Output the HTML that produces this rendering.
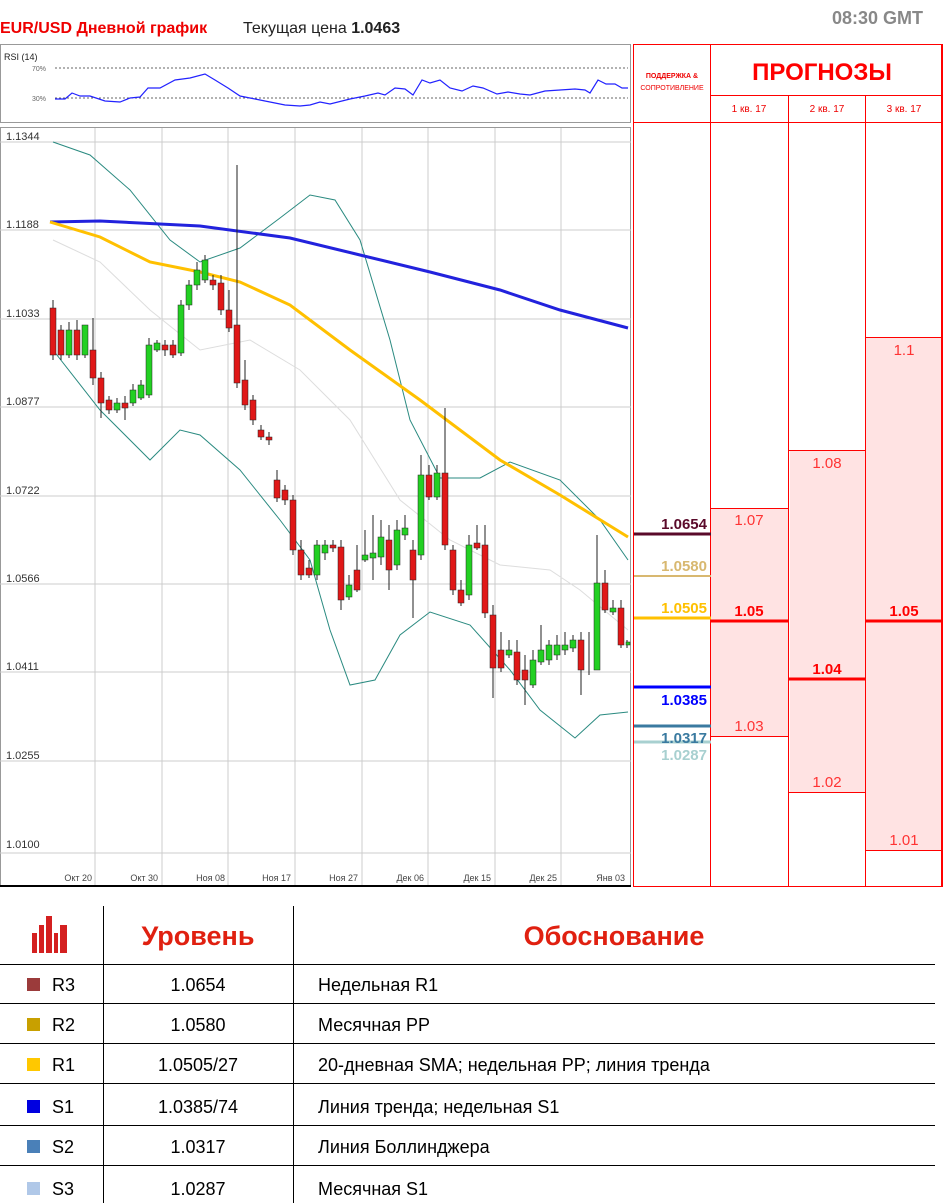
<!DOCTYPE html>
<html><head><meta charset="utf-8"><style>
body{margin:0;width:949px;height:1203px;background:#fff;font-family:"Liberation Sans",sans-serif;position:relative;overflow:hidden}
.a{position:absolute}
</style></head><body>
<div class="a" style="left:0;top:20px;font-size:16px;font-weight:bold;color:#e00">EUR/USD Дневной график</div>
<div class="a" style="left:243px;top:20px;font-size:16px;color:#222">Текущая цена <b>1.0463</b></div>
<div class="a" style="left:832px;top:8px;font-size:18px;font-weight:bold;color:#888">08:30 GMT</div>

<svg class="a" style="left:0;top:0" width="949" height="900" font-family="Liberation Sans, sans-serif">
<rect x="0.5" y="44.5" width="630" height="78" fill="#fff" stroke="#999"/>
<text x="4" y="60" font-size="9" fill="#222">RSI (14)</text>
<text x="32" y="71" font-size="7" fill="#666">70%</text>
<text x="32" y="101" font-size="7" fill="#666">30%</text>
<line x1="55" y1="68" x2="628" y2="68" stroke="#666" stroke-dasharray="2,2"/>
<line x1="55" y1="98" x2="628" y2="98" stroke="#666" stroke-dasharray="2,2"/>
<polyline fill="none" stroke="#22f" stroke-width="1.2" points="55,99 65,99 72,93 80,96 90,96 105,101 120,102 130,98 140,97 148,88 160,88 175,80 190,78 205,74 215,80 228,88 240,96 255,99 270,102 285,105 300,106 310,105 320,102 330,104 350,99 365,96 378,93 385,95 395,88 405,89 413,95 422,80 430,83 440,80 450,88 462,91 473,86 483,88 497,94 508,92 520,94 530,95 545,91 560,90 575,89 585,90 590,93 598,80 606,84 615,84 622,88 628,88"/>

<rect x="0.5" y="127.5" width="630" height="759" fill="#fff" stroke="#999"/>
<g stroke="#ccc" stroke-width="1">
<line x1="0" y1="142" x2="631" y2="142"/><line x1="0" y1="230" x2="631" y2="230"/><line x1="0" y1="319" x2="631" y2="319"/><line x1="0" y1="407" x2="631" y2="407"/><line x1="0" y1="496" x2="631" y2="496"/><line x1="0" y1="584" x2="631" y2="584"/><line x1="0" y1="672" x2="631" y2="672"/><line x1="0" y1="761" x2="631" y2="761"/><line x1="0" y1="853" x2="631" y2="853"/>
<line x1="95" y1="128" x2="95" y2="886"/><line x1="162" y1="128" x2="162" y2="886"/><line x1="228" y1="128" x2="228" y2="886"/><line x1="295" y1="128" x2="295" y2="886"/><line x1="362" y1="128" x2="362" y2="886"/><line x1="428" y1="128" x2="428" y2="886"/><line x1="495" y1="128" x2="495" y2="886"/><line x1="561" y1="128" x2="561" y2="886"/>
</g>
<line x1="0" y1="886" x2="631" y2="886" stroke="#000" stroke-width="2"/>
<g font-size="11" fill="#333">
<text x="6" y="140">1.1344</text><text x="6" y="228">1.1188</text><text x="6" y="317">1.1033</text><text x="6" y="405">1.0877</text><text x="6" y="494">1.0722</text><text x="6" y="582">1.0566</text><text x="6" y="670">1.0411</text><text x="6" y="759">1.0255</text><text x="6" y="848">1.0100</text>
</g>
<g font-size="9" fill="#444" text-anchor="end">
<text x="92" y="881">Окт 20</text><text x="158" y="881">Окт 30</text><text x="225" y="881">Ноя 08</text><text x="291" y="881">Ноя 17</text><text x="358" y="881">Ноя 27</text><text x="424" y="881">Дек 06</text><text x="491" y="881">Дек 15</text><text x="557" y="881">Дек 25</text><text x="625" y="881">Янв 03</text>
</g>
<polyline fill="none" stroke="#ddd" stroke-width="1" points="53,240 100,262 150,310 200,350 250,340 300,370 350,420 400,500 450,540 500,565 550,570 580,590 628,630"/>
<polyline fill="none" stroke="#2a8a80" stroke-width="1" points="53,142 90,155 130,190 170,240 200,262 240,248 280,218 310,195 335,200 360,240 390,340 410,420 440,478 480,478 510,462 560,480 600,520 628,560"/>
<polyline fill="none" stroke="#2a8a80" stroke-width="1" points="53,350 100,410 150,460 180,430 200,435 240,470 280,520 310,560 330,630 350,685 375,680 400,635 430,612 470,625 510,670 540,710 575,738 600,715 628,712"/>
<polyline fill="none" stroke="#22d" stroke-width="3" points="50,222 100,221 200,226 290,238 360,255 430,272 500,290 560,310 628,328"/>
<polyline fill="none" stroke="#ffc000" stroke-width="3" points="50,222 100,237 150,262 200,272 240,282 290,305 350,350 420,400 460,430 500,460 560,495 628,537"/>
<g stroke="#222" stroke-width="1">
<path d="M53 300V360M61 325V360M69 322V358M77 320V360M85 330V358M93 318V385M101 372V418M109 396V414M117 398V413M125 396V420M133 384V406M141 380V400M149 338V398M157 340V352M165 340V356M173 340V358M181 300V356M189 280V310M197 262V290M205 255V283M213 275V290M221 275V315M229 290V332M237 165V388M245 360V410M253 395V425M261 425V440M269 432V445M277 470V502M285 485V505M293 495V555M301 540V580M309 560V578M317 540V580M325 540V560M333 540V552M341 540V610M349 575V600M357 545V592M365 530V562M373 515V580M381 520V565M389 525V590M397 520V570M405 515V540M413 540V618M421 455V560M429 465V500M437 465V500M445 408V550M453 545V595M461 580V606M469 535V600M477 525V550M485 525V618M493 605V698M501 632V672M509 640V658M517 640V685M525 655V705M533 650V688M541 625V665M549 640V665M557 635V660M565 632V655M573 635V652M581 632V695M589 632V675M597 535V670M605 570V613M613 600V615M621 600V648M627 640V648"/>
</g>
<g stroke="#222" stroke-width="0.5">
<g fill="#e01818">
<rect x="50" y="308" width="6" height="47"/><rect x="58" y="330" width="6" height="25"/><rect x="74" y="330" width="6" height="25"/><rect x="90" y="350" width="6" height="28"/><rect x="98" y="378" width="6" height="25"/><rect x="106" y="400" width="6" height="10"/><rect x="122" y="403" width="6" height="5"/><rect x="162" y="345" width="6" height="5"/><rect x="170" y="345" width="6" height="10"/><rect x="210" y="280" width="6" height="5"/><rect x="218" y="283" width="6" height="27"/><rect x="226" y="310" width="6" height="18"/><rect x="234" y="325" width="6" height="58"/><rect x="242" y="380" width="6" height="25"/><rect x="250" y="400" width="6" height="20"/><rect x="258" y="430" width="6" height="7"/><rect x="266" y="437" width="6" height="3"/><rect x="274" y="480" width="6" height="18"/><rect x="282" y="490" width="6" height="10"/><rect x="290" y="500" width="6" height="50"/><rect x="298" y="550" width="6" height="25"/><rect x="306" y="568" width="6" height="7"/><rect x="330" y="545" width="6" height="3"/><rect x="338" y="547" width="6" height="53"/><rect x="354" y="570" width="6" height="20"/><rect x="386" y="540" width="6" height="30"/><rect x="410" y="550" width="6" height="30"/><rect x="426" y="475" width="6" height="22"/><rect x="442" y="473" width="6" height="72"/><rect x="450" y="550" width="6" height="40"/><rect x="458" y="590" width="6" height="13"/><rect x="474" y="543" width="6" height="5"/><rect x="482" y="545" width="6" height="68"/><rect x="490" y="615" width="6" height="53"/><rect x="498" y="650" width="6" height="18"/><rect x="514" y="652" width="6" height="28"/><rect x="522" y="670" width="6" height="10"/><rect x="578" y="640" width="6" height="30"/><rect x="602" y="583" width="6" height="27"/><rect x="618" y="608" width="6" height="37"/>
</g>
<g fill="#22d022">
<rect x="66" y="330" width="6" height="25"/><rect x="82" y="325" width="6" height="30"/><rect x="114" y="403" width="6" height="7"/><rect x="130" y="390" width="6" height="13"/><rect x="138" y="385" width="6" height="13"/><rect x="146" y="345" width="6" height="50"/><rect x="154" y="343" width="6" height="7"/><rect x="178" y="305" width="6" height="48"/><rect x="186" y="285" width="6" height="20"/><rect x="194" y="270" width="6" height="15"/><rect x="202" y="260" width="6" height="20"/><rect x="314" y="545" width="6" height="30"/><rect x="322" y="545" width="6" height="8"/><rect x="346" y="585" width="6" height="12"/><rect x="362" y="555" width="6" height="5"/><rect x="370" y="553" width="6" height="5"/><rect x="378" y="537" width="6" height="20"/><rect x="394" y="530" width="6" height="35"/><rect x="402" y="528" width="6" height="7"/><rect x="418" y="475" width="6" height="80"/><rect x="434" y="473" width="6" height="24"/><rect x="466" y="545" width="6" height="50"/><rect x="506" y="650" width="6" height="5"/><rect x="530" y="660" width="6" height="25"/><rect x="538" y="650" width="6" height="12"/><rect x="546" y="645" width="6" height="15"/><rect x="554" y="645" width="6" height="10"/><rect x="562" y="645" width="6" height="5"/><rect x="570" y="640" width="6" height="8"/><rect x="594" y="583" width="6" height="87"/><rect x="610" y="608" width="6" height="4"/><rect x="626" y="642" width="4" height="3"/>
</g>
</g>

<rect x="790" y="450" width="75" height="342" fill="#ffe3e3"/>
<rect x="711" y="508" width="77" height="228" fill="#ffe3e3"/>
<rect x="866" y="337" width="76" height="513" fill="#ffe3e3"/>
<g stroke="#f00" stroke-width="1" fill="none">
<rect x="633.5" y="44.5" width="309" height="842"/>
<line x1="710.5" y1="44" x2="710.5" y2="886"/>
<line x1="788.5" y1="95" x2="788.5" y2="886"/>
<line x1="865.5" y1="95" x2="865.5" y2="886"/>
<line x1="710" y1="95.5" x2="943" y2="95.5"/>
<line x1="633" y1="122.5" x2="943" y2="122.5"/>
<line x1="711" y1="508.5" x2="788" y2="508.5"/><line x1="711" y1="736.5" x2="788" y2="736.5"/>
<line x1="789" y1="450.5" x2="865" y2="450.5"/><line x1="789" y1="792.5" x2="865" y2="792.5"/>
<line x1="866" y1="337.5" x2="942" y2="337.5"/><line x1="866" y1="850.5" x2="942" y2="850.5"/>
</g>
<line x1="942" y1="44" x2="942" y2="886" stroke="#f00" stroke-width="2"/>
<g stroke="#f00" stroke-width="3"><line x1="711" y1="621" x2="788" y2="621"/><line x1="789" y1="679" x2="865" y2="679"/><line x1="866" y1="621" x2="942" y2="621"/></g>
<text x="672" y="78" font-size="7" fill="#e00" text-anchor="middle" font-weight="bold">ПОДДЕРЖКА &amp;</text>
<text x="672" y="90" font-size="7" fill="#e00" text-anchor="middle">СОПРОТИВЛЕНИЕ</text>
<text x="822" y="80" font-size="24" font-weight="bold" fill="#f00" text-anchor="middle">ПРОГНОЗЫ</text>
<g font-size="10" fill="#e00" text-anchor="middle"><text x="749" y="112">1 кв. 17</text><text x="827" y="112">2 кв. 17</text><text x="904" y="112">3 кв. 17</text></g>
<g font-size="15" fill="#f33" text-anchor="middle"><text x="749" y="525">1.07</text><text x="749" y="731">1.03</text><text x="827" y="468">1.08</text><text x="827" y="787">1.02</text><text x="904" y="355">1.1</text><text x="904" y="845">1.01</text></g>
<g font-size="15" font-weight="bold" fill="#f00" text-anchor="middle"><text x="749" y="616">1.05</text><text x="827" y="674">1.04</text><text x="904" y="616">1.05</text></g>
<g stroke-width="3"><line x1="634" y1="534" x2="711" y2="534" stroke="#5a0a2a"/><line x1="634" y1="576" x2="711" y2="576" stroke="#d8b870" stroke-width="2"/><line x1="634" y1="618" x2="711" y2="618" stroke="#ffc000"/><line x1="634" y1="687" x2="711" y2="687" stroke="#00f"/><line x1="634" y1="726" x2="711" y2="726" stroke="#3a7aa0"/><line x1="634" y1="742" x2="711" y2="742" stroke="#a8d0d0"/></g>
<g font-size="15" font-weight="bold" text-anchor="end"><text x="707" y="529" fill="#5a0a2a">1.0654</text><text x="707" y="571" fill="#d8b870">1.0580</text><text x="707" y="613" fill="#ffc000">1.0505</text><text x="707" y="705" fill="#00f">1.0385</text><text x="707" y="743" fill="#3a7aa0">1.0317</text><text x="707" y="760" fill="#a8d0d0">1.0287</text></g>
</svg>

<svg class="a" style="left:0;top:895px" width="949" height="308" font-family="Liberation Sans, sans-serif">
<g fill="#d42020"><rect x="32" y="38" width="5" height="20"/><rect x="39" y="30" width="5" height="28"/><rect x="46" y="21" width="6" height="37"/><rect x="54" y="38" width="4" height="20"/><rect x="60" y="30" width="7" height="28"/></g>
<text x="198" y="50" font-size="27" font-weight="bold" fill="#e02010" text-anchor="middle">Уровень</text>
<text x="614" y="50" font-size="27" font-weight="bold" fill="#e02010" text-anchor="middle">Обоснование</text>
<g stroke="#000" stroke-width="1">
<line x1="103.5" y1="11" x2="103.5" y2="308"/><line x1="293.5" y1="11" x2="293.5" y2="308"/>
<line x1="0" y1="69.5" x2="935" y2="69.5"/><line x1="0" y1="108.5" x2="935" y2="108.5"/><line x1="0" y1="148.5" x2="935" y2="148.5"/><line x1="0" y1="188.5" x2="935" y2="188.5"/><line x1="0" y1="230.5" x2="935" y2="230.5"/><line x1="0" y1="270.5" x2="935" y2="270.5"/>
</g>
<rect x="27" y="83" width="13" height="13" fill="#9b3b3b"/><rect x="27" y="123" width="13" height="13" fill="#c8a000"/><rect x="27" y="163" width="13" height="13" fill="#ffc800"/><rect x="27" y="205" width="13" height="13" fill="#0000e0"/><rect x="27" y="245" width="13" height="13" fill="#4a80b8"/><rect x="27" y="287" width="13" height="13" fill="#b0c8e8"/>
<g font-size="18" fill="#000">
<text x="52" y="96">R3</text><text x="52" y="136">R2</text><text x="52" y="176">R1</text><text x="52" y="218">S1</text><text x="52" y="258">S2</text><text x="52" y="300">S3</text>
<g text-anchor="middle"><text x="198" y="96">1.0654</text><text x="198" y="136">1.0580</text><text x="198" y="176">1.0505/27</text><text x="198" y="218">1.0385/74</text><text x="198" y="258">1.0317</text><text x="198" y="300">1.0287</text></g>
<text x="318" y="96">Недельная R1</text><text x="318" y="136">Месячная PP</text><text x="318" y="176">20-дневная SMA; недельная PP; линия тренда</text><text x="318" y="218">Линия тренда; недельная S1</text><text x="318" y="258">Линия Боллинджера</text><text x="318" y="300">Месячная S1</text>
</g>
</svg>
</body></html>
